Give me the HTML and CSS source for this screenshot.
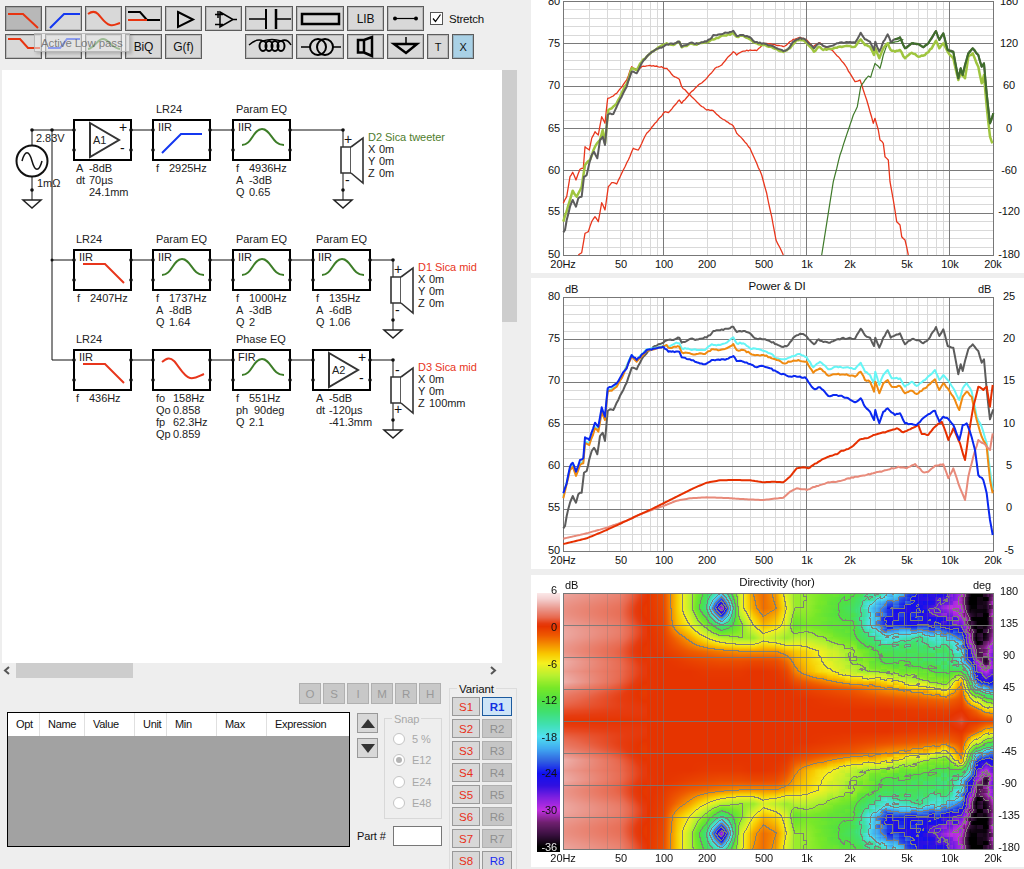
FILE: index.html
```html
<!DOCTYPE html>
<html lang="en">
<head>
<meta charset="utf-8">
<title>VituixCAD</title>
<link rel="stylesheet" href="styles.css">
</head>
<body>
<div class="app">
<div class="left">
  <div class="toolbar">
    <div class="tb-row">
      <button class="tb pressed"><svg width="35" height="23"><path class="ic red" d="M2 7H17L32 21"/></svg></button>
      <button class="tb"><svg width="35" height="23"><path class="ic blue" d="M4 21L18 7H34"/></svg></button>
      <button class="tb"><svg width="35" height="23"><path class="ic red" d="M2 7C6 4 9 4 12 7S19 17 24 18 30 17 34 16"/></svg></button>
      <button class="tb"><svg width="35" height="23"><path class="ic blk" d="M2 5H14L21 13H34"/><path class="ic red" d="M2 13H21"/></svg></button>
      <button class="tb"><svg width="35" height="23"><path class="ic blk" d="M12 5L27 12.500L12 20Z"/></svg></button>
      <button class="tb"><svg width="35" height="23"><path class="ic mid" d="M14 5L27 12.500L14 20ZM27 12.500H31M9 7.500H17M9 17.500H17M12 4V11"/></svg></button>
      <button class="tb wide"><svg width="46" height="23"><path class="ic mid" d="M3 12H20M30 12H45"/><path class="ic blk" d="M20 2V22"/><path class="ic heavy" d="M30 2V22"/></svg></button>
      <button class="tb wide"><svg width="46" height="23"><rect class="ic heavy" x="5" y="7" width="37" height="10"/></svg></button>
      <button class="tb">LIB</button>
      <button class="tb"><svg width="35" height="23"><path class="ic thin" d="M7 11.500H28"/><circle class="dot" cx="7" cy="11.500" r="2"/><circle class="dot" cx="28" cy="11.500" r="2"/></svg></button>
      <span class="check"><svg width="11" height="11"><path class="ic thin" d="M2 5.500L4.500 8.500L9.500 1.500"/></svg></span>
      <span class="check-label">Stretch</span>
    </div>
    <div class="tb-row">
      <button class="tb"><svg width="35" height="23"><path class="ic red" d="M2 4H14L22 13H34"/></svg></button>
      <button class="tb"><svg width="35" height="23"><path class="ic blue" d="M2 13H14L21 4H34"/></svg></button>
      <button class="tb"><svg width="35" height="23"><path class="ic green" d="M2 14C9 13 11 4 17 4S25 13 34 14"/></svg></button>
      <button class="tb">BiQ</button>
      <button class="tb">G(f)</button>
      <button class="tb wide gap-l"><svg width="46" height="23"><path class="ic mid" d="M3 10Q11 3 17 6Q26 3 35 6Q41 3 45 10"/><ellipse class="ic blk" cx="17" cy="11" rx="3.500" ry="5"/><ellipse class="ic blk" cx="23" cy="11" rx="3.500" ry="5"/><ellipse class="ic blk" cx="29" cy="11" rx="3.500" ry="5"/><ellipse class="ic blk" cx="35" cy="11" rx="3.500" ry="5"/></svg></button>
      <button class="tb wide"><svg width="46" height="23"><path class="ic mid" d="M4 12H13M36 12H44"/><circle class="ic blk" cx="21" cy="12" r="8"/><circle class="ic blk" cx="28" cy="12" r="8"/></svg></button>
      <button class="tb"><svg width="35" height="23"><path class="ic heavy" d="M10 5H16V17.500H10ZM16 5L24 2V21L16 17.500"/></svg></button>
      <button class="tb"><svg width="35" height="23"><path class="ic mid" d="M18 2V9"/><path class="ic heavy" d="M6 9H29L18 18Z"/></svg></button>
      <button class="tb narrow">T</button>
      <button class="tb narrow on">X</button>
    </div>
    <div class="tooltip">Active Low pass</div>
  </div>

  <div class="sch-row">
    <div class="schematic">
      <svg class="sch" width="500" height="593" viewBox="2 70 500 593">
        <defs>
          <g id="blk">
            <rect class="box" width="57" height="40"/>
            <circle class="term" cx="0" cy="10" r="1.800"/><circle class="term" cx="0" cy="30" r="1.800"/>
            <circle class="term" cx="57" cy="10" r="1.800"/><circle class="term" cx="57" cy="30" r="1.800"/>
          </g>
          <g id="bell"><path class="cv green" d="M9 25C19 25 20 9 29 9S39 25 51 25"/></g>
          <g id="lp"><path class="cv red" d="M9 14H31L50 33"/></g>
          <g id="hp"><path class="cv blue" d="M9 33L28 14H49"/></g>
          <g id="gnd"><path class="gnd" d="M-9 0H9L0 8Z"/></g>
          <g id="amp"><path class="tri" d="M16 3L45 20L16 37Z"/></g>
          <g id="spk"><path class="spk" d="M-2 0H8V26H-2Z"/><path class="spk" d="M8 0L20 -9V36L8 26"/></g>
        </defs>

        <path class="wire" d="M74 130H32V145M32 177V200M290 130H343V147M343 173V200M52 130V360H74M52 260H74M131 130H153M210 130H233M131 260H153M210 260H233M290 260H313M370 260H393V277M393 303V330M131 360H153M210 360H233M290 360H313M370 360H393V377M393 403V430"/>
        <circle class="term" cx="32" cy="130" r="1.800"/><circle class="term" cx="52" cy="130" r="1.800"/><circle class="term" cx="32" cy="190" r="1.800"/><circle class="term" cx="52" cy="260" r="1.500"/><circle class="term" cx="343" cy="130" r="1.800"/><circle class="term" cx="343" cy="190" r="1.800"/><circle class="term" cx="393" cy="260" r="1.800"/><circle class="term" cx="393" cy="320" r="1.800"/><circle class="term" cx="393" cy="360" r="1.800"/><circle class="term" cx="393" cy="420" r="1.800"/>

        <circle class="src" cx="32" cy="161" r="15.500"/>
        <path class="wire2" d="M22 161C25 150 29 150 32 161S39 172 42 161"/>
        <use href="#gnd" x="32" y="200"/><use href="#gnd" x="343" y="200"/><use href="#gnd" x="393" y="330"/><use href="#gnd" x="393" y="430"/>
        <text x="36" y="142">2.83V</text><text x="37" y="187">1mΩ</text>

        <use href="#blk" x="74" y="120"/><use href="#amp" x="74" y="120"/>
        <text x="93" y="144">A1</text><text class="big" x="119" y="132">+</text><text class="big" x="120" y="153">-</text>
        <text x="76" y="172">A</text><text x="89" y="172">-8dB</text><text x="76" y="184">dt</text><text x="89" y="184">70µs</text><text x="89" y="196">24.1mm</text>

        <text x="156" y="113">LR24</text>
        <use href="#blk" x="153" y="120"/><use href="#hp" x="153" y="120"/><text x="158" y="131">IIR</text>
        <text x="156" y="172">f</text><text x="169" y="172">2925Hz</text>

        <text x="236" y="113">Param EQ</text>
        <use href="#blk" x="233" y="120"/><use href="#bell" x="233" y="120"/><text x="238" y="131">IIR</text>
        <text x="236" y="172">f</text><text x="249" y="172">4936Hz</text><text x="236" y="184">A</text><text x="249" y="184">-3dB</text><text x="236" y="196">Q</text><text x="249" y="196">0.65</text>

        <use href="#spk" x="343" y="147"/>
        <text class="big" x="344" y="144">+</text><text class="big" x="345" y="185">-</text>
        <text class="lab-g" x="368" y="141">D2 Sica tweeter</text><text x="368" y="153">X</text><text x="379" y="153">0m</text><text x="368" y="165">Y</text><text x="379" y="165">0m</text><text x="368" y="177">Z</text><text x="379" y="177">0m</text>

        <text x="76" y="243">LR24</text>
        <use href="#blk" x="74" y="250"/><use href="#lp" x="74" y="250"/><text x="79" y="261">IIR</text>
        <text x="77" y="302">f</text><text x="90" y="302">2407Hz</text>

        <text x="156" y="243">Param EQ</text>
        <use href="#blk" x="153" y="250"/><use href="#bell" x="153" y="250"/><text x="158" y="261">IIR</text>
        <text x="156" y="302">f</text><text x="169" y="302">1737Hz</text><text x="156" y="314">A</text><text x="169" y="314">-8dB</text><text x="156" y="326">Q</text><text x="169" y="326">1.64</text>

        <text x="236" y="243">Param EQ</text>
        <use href="#blk" x="233" y="250"/><use href="#bell" x="233" y="250"/><text x="238" y="261">IIR</text>
        <text x="236" y="302">f</text><text x="249" y="302">1000Hz</text><text x="236" y="314">A</text><text x="249" y="314">-3dB</text><text x="236" y="326">Q</text><text x="249" y="326">2</text>

        <text x="316" y="243">Param EQ</text>
        <use href="#blk" x="313" y="250"/><use href="#bell" x="313" y="250"/><text x="318" y="261">IIR</text>
        <text x="316" y="302">f</text><text x="329" y="302">135Hz</text><text x="316" y="314">A</text><text x="329" y="314">-6dB</text><text x="316" y="326">Q</text><text x="329" y="326">1.06</text>

        <use href="#spk" x="393" y="277"/>
        <text class="big" x="394" y="274">+</text><text class="big" x="395" y="315">-</text>
        <text class="lab-r" x="418" y="271">D1 Sica mid</text><text x="418" y="283">X</text><text x="429" y="283">0m</text><text x="418" y="295">Y</text><text x="429" y="295">0m</text><text x="418" y="307">Z</text><text x="429" y="307">0m</text>

        <text x="76" y="343">LR24</text>
        <use href="#blk" x="74" y="350"/><use href="#lp" x="74" y="350"/><text x="79" y="361">IIR</text>
        <text x="76" y="402">f</text><text x="89" y="402">436Hz</text>

        <use href="#blk" x="153" y="350"/>
        <path class="cv red" d="M162 362C167 358 170 357 174 361S184 377 190 378 199 376 204 374"/>
        <text x="156" y="402">fo</text><text x="173" y="402">158Hz</text><text x="156" y="414">Qo</text><text x="173" y="414">0.858</text><text x="156" y="426">fp</text><text x="173" y="426">62.3Hz</text><text x="156" y="438">Qp</text><text x="173" y="438">0.859</text>

        <text x="236" y="343">Phase EQ</text>
        <use href="#blk" x="233" y="350"/><use href="#bell" x="233" y="350"/><text x="238" y="361">FIR</text>
        <text x="236" y="402">f</text><text x="249" y="402">551Hz</text><text x="236" y="414">ph</text><text x="254" y="414">90deg</text><text x="236" y="426">Q</text><text x="249" y="426">2.1</text>

        <use href="#blk" x="313" y="350"/><use href="#amp" x="313" y="350"/>
        <text x="332" y="374">A2</text><text class="big" x="358" y="362">+</text><text class="big" x="359" y="383">-</text>
        <text x="316" y="402">A</text><text x="329" y="402">-5dB</text><text x="316" y="414">dt</text><text x="329" y="414">-120µs</text><text x="329" y="426">-41.3mm</text>

        <use href="#spk" x="393" y="377"/>
        <text class="big" x="395" y="375">-</text><text class="big" x="394" y="414">+</text>
        <text class="lab-r" x="418" y="371">D3 Sica mid</text><text x="418" y="383">X</text><text x="429" y="383">0m</text><text x="418" y="395">Y</text><text x="429" y="395">0m</text><text x="418" y="407">Z</text><text x="429" y="407">100mm</text>
      </svg>
    </div>
    <div class="vscroll"><div class="vthumb"></div></div>
  </div>

  <div class="hscroll">
    <svg class="chev" width="8" height="9"><path class="ic arrow" d="M6 1L2 4.500L6 8"/></svg>
    <div class="hthumb"></div>
    <svg class="chev chev-end" width="8" height="9"><path class="ic arrow" d="M2 1L6 4.500L2 8"/></svg>
  </div>

  <div class="bottom">
    <div class="main-col">
      <div class="opt-btns">
        <button class="dis">O</button><button class="dis">S</button><button class="dis">I</button><button class="dis">M</button><button class="dis">R</button><button class="dis">H</button>
      </div>
      <div class="opt-row">
        <div class="table">
          <div class="thead">
            <span class="th w32">Opt</span><span class="th w45">Name</span><span class="th w50">Value</span><span class="th w32">Unit</span><span class="th w50">Min</span><span class="th w50">Max</span><span class="th last">Expression</span>
          </div>
        </div>
        <div class="ctrl">
          <div class="ctrl-top">
            <div class="arrows">
              <button class="arrow-btn"><svg width="14" height="9"><path class="tri-fill" d="M7 0L14 9H0Z"/></svg></button>
              <button class="arrow-btn"><svg width="14" height="9"><path class="tri-fill" d="M0 0H14L7 9Z"/></svg></button>
            </div>
            <div class="snap">
              <span class="snap-title">Snap</span>
              <div class="snap-row"><span class="radio"></span>5 %</div>
              <div class="snap-row"><span class="radio on"></span>E12</div>
              <div class="snap-row"><span class="radio"></span>E24</div>
              <div class="snap-row"><span class="radio"></span>E48</div>
            </div>
          </div>
          <div class="part"><span>Part #</span><span class="part-input"></span></div>
        </div>
      </div>
    </div>
    <div class="variant">
      <span class="variant-title">Variant</span>
      <div class="variant-grid">
        <button class="vb s">S1</button><button class="vb r1">R1</button>
        <button class="vb s">S2</button><button class="vb dim">R2</button>
        <button class="vb s">S3</button><button class="vb dim">R3</button>
        <button class="vb s">S4</button><button class="vb dim">R4</button>
        <button class="vb s">S5</button><button class="vb dim">R5</button>
        <button class="vb s">S6</button><button class="vb dim">R6</button>
        <button class="vb s">S7</button><button class="vb dim">R7</button>
        <button class="vb s">S8</button><button class="vb r8">R8</button>
      </div>
    </div>
  </div>
</div>

<div class="right">
  <div class="panel p1">
    <svg class="chart" width="493" height="273" viewBox="531 0 493 273">
      <g id="grid1"></g><g id="curves1"></g>
      <g class="yl"><text x="560" y="5">80</text><text x="560" y="47">75</text><text x="560" y="89">70</text><text x="560" y="132">65</text><text x="560" y="174">60</text><text x="560" y="215">55</text><text x="560" y="258">50</text></g>
      <g class="yr"><text x="1009" y="5">180</text><text x="1009" y="47">120</text><text x="1009" y="89">60</text><text x="1009" y="132">0</text><text x="1009" y="174">-60</text><text x="1009" y="215">-120</text><text x="1009" y="258">-180</text></g>
      <g class="xl"><text x="563" y="268">20Hz</text><text x="621" y="268">50</text><text x="664" y="268">100</text><text x="707" y="268">200</text><text x="764" y="268">500</text><text x="807" y="268">1k</text><text x="850" y="268">2k</text><text x="907" y="268">5k</text><text x="950" y="268">10k</text><text x="993" y="268">20k</text></g>
    </svg>
  </div>
  <div class="panel p2">
    <svg class="chart" width="493" height="291" viewBox="531 278 493 291">
      <g id="grid2"></g><g id="curves2"></g>
      <text class="title" x="777" y="290">Power &amp; DI</text>
      <text x="565" y="293">dB</text><text x="978" y="293">dB</text>
      <g class="yl"><text x="560" y="300">80</text><text x="560" y="342">75</text><text x="560" y="384">70</text><text x="560" y="427">65</text><text x="560" y="469">60</text><text x="560" y="511">55</text><text x="560" y="554">50</text></g>
      <g class="yr"><text x="1009" y="300">25</text><text x="1009" y="342">20</text><text x="1009" y="384">15</text><text x="1009" y="427">10</text><text x="1009" y="469">5</text><text x="1009" y="511">0</text><text x="1009" y="554">-5</text></g>
      <g class="xl"><text x="563" y="564">20Hz</text><text x="621" y="564">50</text><text x="664" y="564">100</text><text x="707" y="564">200</text><text x="764" y="564">500</text><text x="807" y="564">1k</text><text x="850" y="564">2k</text><text x="907" y="564">5k</text><text x="950" y="564">10k</text><text x="993" y="564">20k</text></g>
    </svg>
  </div>
  <div class="panel p3">
    <canvas id="heat" class="heat" width="456" height="259"></canvas>
    <svg class="chart over" width="493" height="292" viewBox="531 575 493 292">
      <g id="grid3"></g>
      <text class="title" x="777" y="586">Directivity (hor)</text>
      <text x="565" y="589">dB</text><text x="973" y="589">deg</text>
      <g class="yc"><text x="557" y="594">6</text><text x="557" y="631">0</text><text x="557" y="668">-6</text><text x="557" y="704">-12</text><text x="557" y="741">-18</text><text x="557" y="777">-24</text><text x="557" y="814">-30</text><text class="on-black" x="557" y="851">-36</text></g>
      <g class="yr"><text x="1009" y="595">180</text><text x="1009" y="627">135</text><text x="1009" y="659">90</text><text x="1009" y="691">45</text><text x="1009" y="723">0</text><text x="1009" y="755">-45</text><text x="1009" y="787">-90</text><text x="1009" y="819">-135</text><text x="1009" y="851">-180</text></g>
      <g class="xl"><text x="563" y="862">20Hz</text><text x="621" y="862">50</text><text x="664" y="862">100</text><text x="707" y="862">200</text><text x="764" y="862">500</text><text x="807" y="862">1k</text><text x="850" y="862">2k</text><text x="907" y="862">5k</text><text x="950" y="862">10k</text><text x="993" y="862">20k</text></g>
    </svg>
  </div>
</div>
</div>
<script src="script.js"></script>
</body>
</html>
```
FILE: styles.css
```css
* { box-sizing: border-box; }
html, body { margin: 0; padding: 0; height: 869px; overflow: hidden; background: #eeeeee; }
body, button { font-family: "Liberation Sans", Arial, sans-serif; font-size: 11px; color: #111; letter-spacing: -0.1px; }
button { padding: 0; margin: 0; cursor: default; }
.app { display: flex; width: 1024px; height: 869px; }
.left { width: 531px; flex: none; display: flex; flex-direction: column; }
.right { width: 493px; flex: none; display: flex; flex-direction: column; }

/* toolbar */
.toolbar { position: relative; height: 70px; padding: 6px 0 0 5px; display: flex; flex-direction: column; gap: 3px; flex: none; }
.tb-row { display: flex; gap: 3px; align-items: center; height: 25px; }
.tb { width: 37px; height: 25px; background: #d8d8d8; border: 1px solid #5c5c5c; box-shadow: inset 0 0 0 1px rgba(90, 90, 90, 0.25); display: flex; align-items: center; justify-content: center; font-size: 12px; }
.tb svg { display: block; }
.tb.wide { width: 48px; }
.tb.narrow { width: 22px; font-size: 11px; }
.tb.on { background: #a9d1e6; }
.tb.pressed { background: #b8b8b8; }
.gap-l { margin-left: 40px; }
.ic { fill: none; stroke-linejoin: miter; }
.ic.red { stroke: #e83410; stroke-width: 2; }
.ic.blue { stroke: #1438f0; stroke-width: 2; }
.ic.green { stroke: #3d7d28; stroke-width: 2; }
.ic.blk { stroke: #000; stroke-width: 2; }
.ic.heavy { stroke: #000; stroke-width: 2.500; }
.ic.mid { stroke: #000; stroke-width: 1.500; }
.ic.thin { stroke: #000; stroke-width: 1.200; }
.ic.arrow { stroke: #555; stroke-width: 2; }
.dot { fill: #000; }
.check { width: 13px; height: 13px; margin-left: 3px; background: #fff; border: 1px solid #555; display: flex; align-items: center; justify-content: center; }
.check-label { margin-left: 3px; font-size: 11.500px; letter-spacing: -0.2px; }
.tooltip { position: absolute; left: 34px; top: 33px; width: 96px; height: 19px; padding-left: 6px; line-height: 18px; font-size: 11.500px; color: rgba(80, 80, 80, 0.7); background: rgba(236, 236, 236, 0.55); border: 1px solid rgba(170, 170, 170, 0.75); box-shadow: 2px 2px 3px rgba(0, 0, 0, 0.18); }

/* schematic */
.sch-row { display: flex; height: 593px; padding-left: 2px; flex: none; }
.schematic { width: 500px; height: 593px; background: #fff; flex: none; }
.sch { display: block; }
.sch text { font-size: 11px; fill: #222; letter-spacing: -0.05px; }
.sch text.big { font-size: 14px; fill: #111; }
.sch text.lab-g { fill: #4f7d2d; }
.sch text.lab-r { fill: #e8361c; }
.box { fill: #fff; stroke: #000; stroke-width: 2; }
.term { fill: #111; }
.wire { fill: none; stroke: #111; stroke-width: 1; }
.wire2 { fill: none; stroke: #111; stroke-width: 1.500; }
.cv { fill: none; stroke-width: 2; }
.cv.red { stroke: #e8361c; }
.cv.blue { stroke: #1438f0; }
.cv.green { stroke: #3d7d28; }
.gnd { fill: #fff; stroke: #222; stroke-width: 1.500; }
.tri { fill: none; stroke: #333; stroke-width: 2; }
.spk { fill: #fff; stroke: #333; stroke-width: 1.600; }
.src { fill: #fff; stroke: #111; stroke-width: 2; }
.vscroll { width: 15px; height: 593px; flex: none; }
.vthumb { width: 15px; height: 252px; background: #cdcdcd; }

/* horizontal scrollbar */
.hscroll { display: flex; align-items: center; height: 15px; flex: none; width: 502px; padding-left: 3px; }
.hthumb { width: 117px; height: 15px; background: #cdcdcd; margin-left: 5px; flex: none; }
.chev { display: block; flex: none; }
.chev-end { margin-left: auto; margin-right: 5px; }

/* bottom */
.bottom { display: flex; height: 191px; flex: none; overflow: hidden; }
.main-col { width: 449px; flex: none; padding: 5px 0 0 7px; display: flex; flex-direction: column; }
.opt-btns { display: flex; gap: 2px; justify-content: flex-end; padding-right: 8px; height: 21px; flex: none; }
.dis { width: 22px; height: 21px; background: #c8c8c8; border: 1px solid #b0b0b0; color: #999; font-size: 11.500px; }
.opt-row { display: flex; gap: 7px; margin-top: 8px; }
.table { width: 343px; height: 135px; background: #a2a2a2; border: 1px solid #000; flex: none; }
.thead { display: flex; height: 23px; background: #fff; align-items: center; }
.th { height: 23px; line-height: 23px; padding-left: 8px; border-right: 1px solid #e0e0e0; letter-spacing: -0.3px; flex: none; }
.w32 { width: 32px; } .w45 { width: 45px; } .w50 { width: 50px; }
.th.last { flex: 1; border-right: 0; }
.ctrl { display: flex; flex-direction: column; gap: 7px; flex: none; width: 85px; }
.ctrl-top { display: flex; gap: 6px; }
.arrows { display: flex; flex-direction: column; gap: 5px; padding-top: 1px; flex: none; }
.arrow-btn { width: 21px; height: 20px; background: #d8d8d8; border: 1px solid #999; display: flex; align-items: center; justify-content: center; }
.tri-fill { fill: #333; }
.snap { position: relative; width: 58px; height: 101px; margin-top: 6px; border: 1px solid #d8d8d8; padding: 9px 0 0 8px; color: #a8a8a8; }
.snap-title { position: absolute; left: 7px; top: -6px; padding: 0 2px; background: #eeeeee; line-height: 12px; color: #a8a8a8; }
.snap-row { display: flex; align-items: center; gap: 7px; height: 21.500px; }
.radio { position: relative; width: 12px; height: 12px; border-radius: 50%; background: #fff; border: 1px solid #c4c4c4; flex: none; }
.radio.on::after { content: ""; position: absolute; left: 2px; top: 2px; width: 6px; height: 6px; border-radius: 50%; background: #b4b4b4; }
.part { display: flex; align-items: center; justify-content: space-between; height: 20px; }
.part-input { width: 49px; height: 20px; background: #fff; border: 1px solid #777; }

/* variant */
.variant { position: relative; width: 68px; height: 190px; margin-top: 10px; flex: none; border: 1px solid #dcdcdc; border-bottom: 0; padding: 8px 0 0 2px; }
.variant-title { position: absolute; left: 7px; top: -6px; padding: 0 2px; background: #eeeeee; line-height: 12px; font-size: 11.500px; }
.variant-grid { display: grid; grid-template-columns: 28px 30px; grid-auto-rows: 19px; column-gap: 2px; row-gap: 3px; }
.vb { border: 1px solid #999; font-size: 11.500px; background: #d8d8d8; }
.vb.s { color: #e8301a; }
.vb.dim { background: #c6c6c6; border-color: #b0b0b0; color: #8f8f8f; }
.vb.r1 { background: #cde4f7; border-color: #1c5a9e; color: #1230e0; font-weight: bold; }
.vb.r8 { color: #1a2cf0; }

/* charts */
.panel { position: relative; background: #fff; flex: none; overflow: hidden; }
.p1 { height: 273px; }
.p2 { height: 291px; margin-top: 5px; }
.p3 { height: 292px; margin-top: 6px; }
.chart { display: block; position: relative; }
.chart text { font-size: 11px; fill: #111; letter-spacing: -0.1px; }
.chart text.title { text-anchor: middle; font-size: 11.500px; }
.chart text.on-black { fill: #e8e8e8; }
.yl text, .yc text { text-anchor: end; }
.yr text, .xl text { text-anchor: middle; }
.heat { position: absolute; left: 6px; top: 18px; }
.g-minor { stroke: #d9d9d9; stroke-width: 1; }
.g-major { stroke: #7a7a7a; stroke-width: 1; }
.g-h-minor { stroke: rgba(120, 120, 120, 0.28); stroke-width: 1; }
.g-h-vmajor { stroke: rgba(120, 120, 120, 0.5); stroke-width: 1; }
.g-h-major { stroke: rgba(120, 120, 120, 0.9); stroke-width: 1; }
.frame { fill: none; stroke: #777; stroke-width: 1; }
.c { fill: none; stroke-linejoin: round; }
.c-gray { stroke: #5c5c5c; stroke-width: 2; }
.c-lime { stroke: #9fc53f; stroke-width: 2.500; }
.c-dgreen { stroke: #3f7a2a; stroke-width: 1.200; }
.c-dgreen2 { stroke: #3f6e2b; stroke-width: 2; }
.c-red { stroke: #e8361c; stroke-width: 1.300; }
.c-blue { stroke: #0a28f0; stroke-width: 2; }
.c-orange { stroke: #f08a10; stroke-width: 2; }
.c-cyan { stroke: #66f5f5; stroke-width: 2; }
.c-di { stroke: #e63000; stroke-width: 2; }
.c-salmon { stroke: #e88a7a; stroke-width: 2; }
```
FILE: script.js
```js
(function () {
  var NS = "http://www.w3.org/2000/svg";
  var X0 = 563.5, DEC = 143, XR = 993.5;
  function fx(f) { return Math.round(X0 + Math.log10(f / 20) * DEC) + 0.5; }
  var FREQS = [];
  [10, 100, 1000, 10000].forEach(function (d) {
    for (var i = 1; i < 10; i++) { var f = d * i; if (f > 20 && f < 20000) FREQS.push(f); }
  });
  function line(g, x1, y1, x2, y2, cls) {
    var l = document.createElementNS(NS, "line");
    l.setAttribute("x1", x1); l.setAttribute("y1", y1); l.setAttribute("x2", x2); l.setAttribute("y2", y2);
    l.setAttribute("class", cls); g.appendChild(l);
  }
  function isMajor(f) { return f === 100 || f === 1000 || f === 10000; }
  function grid(id, top, bottom) {
    var g = document.getElementById(id), i, y;
    for (i = 1; i < 30; i++) {
      if (i % 5 === 0) continue;
      y = Math.round(top + (bottom - top) * i / 30) + 0.5;
      line(g, X0, y, XR, y, "g-minor");
    }
    FREQS.forEach(function (f) { if (!isMajor(f)) line(g, fx(f), top, fx(f), bottom, "g-minor"); });
    for (i = 5; i < 30; i += 5) {
      y = Math.round(top + (bottom - top) * i / 30) + 0.5;
      line(g, X0, y, XR, y, "g-major");
    }
    FREQS.forEach(function (f) { if (isMajor(f)) line(g, fx(f), top, fx(f), bottom, "g-major"); });
    var r = document.createElementNS(NS, "rect");
    r.setAttribute("x", X0); r.setAttribute("y", top + 0.5); r.setAttribute("width", XR - X0); r.setAttribute("height", bottom - top);
    r.setAttribute("class", "frame"); g.appendChild(r);
  }
  grid("grid1", 1, 255);
  grid("grid2", 297, 551);

  var g3 = document.getElementById("grid3");
  FREQS.forEach(function (f) { line(g3, fx(f), 593, fx(f), 849, isMajor(f) ? "g-h-vmajor" : "g-h-minor"); });
  for (var a = 1; a < 8; a++) { var yy = Math.round(593 + a * 32) + 0.5; line(g3, X0, yy, XR, yy, "g-h-major"); }
  var fr = document.createElementNS(NS, "rect");
  fr.setAttribute("x", X0); fr.setAttribute("y", 593.5); fr.setAttribute("width", XR - X0); fr.setAttribute("height", 256); fr.setAttribute("class", "frame");
  g3.appendChild(fr);

  var seed = 12345;
  function rnd() { seed = (seed * 16807) % 2147483647; return seed / 2147483647; }

  function curve(id, pts, cls, yOff, amp, ampFrom, from) {
    var out = [];
    for (var i = 0; i < pts.length - 1; i++) {
      var a = pts[i], b = pts[i + 1];
      if (from !== undefined && b[0] < from) continue;
      var steps = Math.max(1, Math.round((b[0] - a[0]) / 5));
      for (var s = 0; s < steps; s++) {
        var zx = a[0] + (b[0] - a[0]) * s / steps;
        var zy = a[1] + (b[1] - a[1]) * s / steps;
        var n = (s === 0 || zx < ampFrom) ? 0 : (rnd() - 0.5) * amp * 2;
        out.push((520 + zx / 3).toFixed(1) + "," + (yOff + zy / 3 + n).toFixed(1));
      }
    }
    var last = pts[pts.length - 1];
    out.push((520 + last[0] / 3).toFixed(1) + "," + (yOff + last[1] / 3).toFixed(1));
    var p = document.createElementNS(NS, "polyline");
    p.setAttribute("points", out.join(" "));
    p.setAttribute("class", "c " + cls);
    document.getElementById(id).appendChild(p);
  }

  var gray = [[130,697],[135,690],[140,660],[150,620],[158,600],[168,620],[175,595],[185,590],[192,530],[200,525],[208,490],[215,465],[222,455],[232,475],[240,420],[248,410],[255,435],[263,345],[270,340],[280,342],[290,320],[305,290],[320,260],[335,215],[350,220],[365,190],[385,165],[405,150],[430,140],[440,133],[460,132],[478,125],[485,140],[500,135],[512,128],[525,132],[550,127],[570,118],[580,105],[600,103],[620,98],[640,92],[650,108],[670,105],[690,112],[705,127],[730,130],[750,136],[770,145],[790,153],[805,147],[820,125],[840,113],[855,118],[870,133],[882,145],[896,130],[910,138],[925,140],[945,133],[965,127],[985,127],[1005,128],[1022,98],[1035,118],[1050,125],[1062,150],[1066,125],[1078,155],[1090,125],[1103,103],[1112,125],[1125,118],[1140,112],[1155,145],[1175,130],[1195,132],[1210,142],[1225,130],[1248,93],[1258,120],[1270,100],[1283,150],[1300,155],[1315,235],[1322,205],[1328,225],[1335,195],[1345,160],[1358,145],[1375,165],[1385,200],[1392,190],[1400,280],[1410,370],[1420,340]];
  var lime = [[130,665],[150,600],[158,572],[170,590],[185,560],[195,495],[210,480],[225,440],[240,420],[248,390],[255,430],[265,330],[275,325],[290,310],[305,280],[325,240],[335,205],[350,210],[365,185],[385,165],[405,150],[430,135],[440,130],[460,135],[478,125],[485,142],[500,138],[512,130],[525,133],[550,128],[570,122],[600,110],[640,100],[650,110],[670,107],[690,118],[705,128],[730,135],[770,147],[790,156],[810,145],[830,120],[850,120],[870,140],[882,155],[896,140],[910,150],[945,143],[985,138],[1005,140],[1022,118],[1035,135],[1050,140],[1062,165],[1066,145],[1078,175],[1090,145],[1103,130],[1112,150],[1125,155],[1140,150],[1155,175],[1175,158],[1195,170],[1215,165],[1235,145],[1248,122],[1258,145],[1270,130],[1283,155],[1300,175],[1315,240],[1322,220],[1335,235],[1345,170],[1358,160],[1375,200],[1385,250],[1392,225],[1400,320],[1410,410],[1417,430]];
  var tweeter = [[905,765],[920,670],[940,545],[960,465],[985,390],[1000,345],[1012,320],[1022,260],[1035,240],[1045,228],[1052,232],[1065,190],[1080,205],[1090,165],[1103,130],[1130,125],[1150,118]];
  var redLP = [[130,610],[140,590],[150,530],[158,517],[168,540],[180,508],[190,505],[195,440],[208,450],[215,415],[225,395],[235,405],[245,350],[255,370],[263,295],[275,290],[290,280],[305,262],[320,240],[335,200],[350,210],[365,200],[385,197],[410,198],[440,205],[460,228],[478,238],[485,260],[510,285],[540,315],[560,330],[580,332],[600,352],[620,365],[640,378],[650,400],[670,420],[690,445],[710,490],[725,525],[740,580],[755,650],[768,720],[790,765]];
  var redHP = [[175,765],[185,758],[195,700],[205,695],[215,665],[225,650],[235,665],[245,608],[255,630],[265,560],[275,548],[290,552],[305,520],[325,480],[340,445],[355,450],[380,400],[410,365],[435,335],[445,338],[465,315],[478,300],[485,310],[510,280],[530,260],[555,240],[585,205],[605,195],[625,170],[640,155],[650,165],[665,155],[690,150],[710,152],[735,130],[760,133],[790,140],[805,130],[820,118],[840,112],[860,120],[880,140],[897,128],[915,140],[935,150],[955,170],[975,195],[990,220],[1005,245],[1020,240],[1030,270],[1040,300],[1050,335],[1060,370],[1065,355],[1075,390],[1080,420],[1090,430],[1095,470],[1105,480],[1110,545],[1120,600],[1130,665],[1140,675],[1145,710],[1155,720],[1165,765]];
  curve("curves1", redLP, "c-red", 0, 0.5, 0);
  curve("curves1", redHP, "c-red", 0, 0.5, 0);
  curve("curves1", tweeter, "c-dgreen", 0, 0.4, 0);
  curve("curves1", lime, "c-lime", 0, 0.7, 0);
  curve("curves1", gray, "c-gray", 0, 0.7, 0);
  curve("curves1", gray, "c-dgreen2", 0, 0.7, 0, 1130);

  var orange = [[130,655],[150,570],[158,560],[168,588],[180,555],[190,550],[195,490],[208,495],[225,445],[235,455],[245,395],[255,420],[263,335],[275,332],[290,320],[305,295],[335,230],[350,245],[380,212],[410,205],[440,195],[445,203],[478,200],[485,217],[510,220],[530,222],[555,222],[575,208],[600,210],[620,205],[640,192],[650,210],[670,210],[690,220],[710,225],[730,225],[750,232],[770,240],[790,250],[810,245],[835,240],[860,245],[880,278],[900,265],[925,287],[950,283],[980,283],[1005,290],[1022,275],[1035,300],[1050,305],[1062,335],[1066,305],[1078,340],[1090,310],[1103,300],[1115,320],[1140,318],[1155,340],[1175,332],[1190,342],[1215,325],[1245,298],[1258,330],[1270,310],[1283,325],[1300,350],[1318,390],[1328,350],[1340,335],[1355,350],[1370,420],[1385,470],[1400,500],[1410,600],[1418,640]];
  var cyan = [[130,650],[150,565],[158,555],[168,583],[180,550],[190,545],[195,485],[208,490],[225,440],[235,450],[245,390],[255,415],[263,330],[275,327],[290,315],[305,290],[335,225],[350,240],[380,208],[410,203],[440,197],[445,200],[465,190],[478,190],[485,205],[510,208],[530,210],[555,210],[575,193],[600,195],[620,188],[640,172],[650,190],[670,190],[690,205],[710,207],[730,212],[750,220],[770,235],[790,238],[810,232],[835,222],[860,232],[880,262],[900,245],[925,268],[950,260],[980,262],[1005,267],[1022,248],[1035,275],[1050,285],[1062,310],[1066,275],[1078,315],[1090,285],[1103,270],[1115,295],[1140,295],[1155,320],[1175,305],[1190,318],[1215,300],[1245,270],[1258,300],[1270,285],[1283,300],[1300,325],[1318,360],[1328,325],[1340,310],[1355,335],[1370,410],[1385,440],[1400,490],[1410,570],[1418,630]];
  var blue = [[130,640],[140,610],[150,560],[158,548],[168,575],[180,540],[190,535],[195,472],[208,480],[225,428],[235,440],[245,382],[255,410],[263,325],[275,320],[290,310],[305,285],[320,265],[335,225],[350,240],[380,210],[410,205],[430,200],[445,215],[478,215],[485,232],[510,238],[530,247],[555,253],[575,240],[600,240],[620,237],[640,228],[650,243],[670,245],[690,252],[710,262],[730,258],[750,265],[770,275],[800,287],[830,290],[855,292],[875,320],[885,328],[900,322],[925,348],[950,345],[980,353],[1005,367],[1022,355],[1035,380],[1050,395],[1062,420],[1066,390],[1078,430],[1090,395],[1103,385],[1125,405],[1140,400],[1155,430],[1175,432],[1190,435],[1215,410],[1245,392],[1258,425],[1270,410],[1283,415],[1300,435],[1318,480],[1328,435],[1340,430],[1350,455],[1365,510],[1375,585],[1390,600],[1400,640],[1410,720],[1418,765]];
  var di = [[130,792],[200,775],[260,750],[320,722],[360,703],[400,685],[430,670],[480,645],[520,625],[560,608],[600,601],[640,600],[690,601],[730,607],[760,605],[790,607],[810,590],[830,565],[850,562],[865,565],[880,555],[900,543],[930,528],[950,523],[965,512],[985,507],[1000,497],[1015,482],[1025,477],[1040,475],[1060,465],[1080,460],[1100,455],[1130,445],[1150,457],[1175,445],[1195,435],[1205,462],[1225,465],[1245,440],[1265,425],[1275,450],[1285,480],[1300,445],[1320,490],[1335,540],[1345,470],[1360,380],[1375,320],[1390,330],[1400,320],[1410,380],[1418,315]];
  var salmon = [[130,776],[200,760],[260,743],[320,722],[360,703],[400,688],[430,678],[470,662],[510,655],[560,652],[620,654],[680,658],[730,660],[790,653],[810,635],[830,625],[860,630],[890,618],[925,607],[950,605],[985,595],[1020,588],[1060,580],[1100,570],[1135,560],[1160,565],[1185,552],[1210,577],[1225,575],[1245,557],[1270,553],[1285,595],[1300,565],[1315,610],[1335,660],[1345,590],[1360,530],[1375,480],[1390,490],[1400,500],[1410,510],[1418,460]];
  curve("curves2", gray, "c-gray", 296, 0.7, 0);
  curve("curves2", cyan, "c-cyan", 280, 0.7, 0);
  curve("curves2", orange, "c-orange", 280, 0.7, 0);
  curve("curves2", salmon, "c-salmon", 280, 0.5, 850);
  curve("curves2", di, "c-di", 280, 0.5, 850);
  curve("curves2", blue, "c-blue", 280, 0.7, 0);

  /* heat map */
  var CM = [[6,255,245,245],[4.5,244,208,208],[3,234,154,144],[1.5,232,106,80],[0.5,230,60,16],[0,230,52,0],[-1.5,238,90,0],[-3,244,144,0],[-4.5,248,200,0],[-6,245,240,32],[-8,184,240,48],[-10,120,232,40],[-12,80,224,64],[-14,64,224,112],[-16,64,224,176],[-18,80,224,240],[-20,64,168,240],[-22,48,96,224],[-24,16,16,240],[-26,48,16,224],[-28,128,32,224],[-30,192,48,224],[-32,112,32,112],[-34,58,16,64],[-36,0,0,0]];
  function cmap(v) {
    if (v >= 6) return [255, 245, 245];
    if (v <= -36) return [0, 0, 0];
    for (var i = 0; i < CM.length - 1; i++) {
      var a = CM[i], b = CM[i + 1];
      if (v <= a[0] && v >= b[0]) {
        var t = (a[0] - v) / (a[0] - b[0]);
        return [a[1] + (b[1] - a[1]) * t, a[2] + (b[2] - a[2]) * t, a[3] + (b[3] - a[3]) * t];
      }
    }
    return [0, 0, 0];
  }
  var TH = [0, 15, 30, 45, 55, 70, 84, 98, 117, 135, 159, 180];
  var TAB = [
    [130, 0, 0.6, 1.8, 3, 3.7, 2.8, 3.5, 3.2, 3.2, 3, 3, 3],
    [300, 0, 0.2, 0.6, 1.2, 1.4, 1.2, 1.5, 1.6, 1.8, 1.8, 2, 2],
    [370, 0, 0, 0, 0.1, 0.1, 0.1, 0.2, 0.2, 0.2, 0.2, 0.2, 0.2],
    [430, 0, 0, 0, 0, 0, 0, 0, -0.2, -0.4, -0.6, -0.8, -1],
    [470, 0, 0, 0, 0, 0, 0, -0.2, -0.8, -2, -4, -4.5, -4.5],
    [510, 0, 0, 0, 0, 0, 0, -0.5, -1.5, -3.5, -6, -8, -8],
    [560, 0, 0, 0, 0, 0, -0.2, -0.8, -2, -6, -10, -15, -13],
    [605, 0, 0, 0, 0, 0, -0.2, -1, -2.5, -8, -15, -30, -18],
    [660, 0, 0, 0, 0, 0, -0.2, -1, -3, -9, -10, -7, -7],
    [700, 0, 0, 0, 0, 0, 0, -0.8, -3, -9, -6, -3.5, -3],
    [730, 0, 0, 0, 0, 0, 0, -0.8, -3, -7, -4, -2, -2],
    [770, 0, 0, 0, 0, 0, -0.2, -1, -3, -8, -5, -3, -3.5],
    [800, 0, 0, 0, 0, -0.2, -0.8, -2, -3.8, -9, -7, -6, -7],
    [825, 0, 0, 0, -0.2, -1, -2.5, -3.5, -4.5, -8, -11, -9, -9],
    [860, 0, 0, 0, -0.5, -1.5, -4, -4.5, -5, -8, -10, -9, -9],
    [1000, 0, 0, -0.5, -1.5, -4, -8, -9, -9, -11, -12, -13.5, -12],
    [1100, 0, 0, -1, -3, -5, -10, -12, -13, -18, -24, -23, -17],
    [1200, 0, -0.3, -1.5, -4, -8, -11, -13, -13, -15, -24, -25, -24],
    [1280, 0, -0.5, -2, -7, -10, -13, -14, -14, -18, -25, -29, -26],
    [1325, 1, 0, -1, -2, -3, -12, -17, -18, -22, -27, -30, -31],
    [1350, 0, -1, -5, -10, -14, -18, -24, -26, -30, -33, -36, -36],
    [1370, 0, -2, -7, -16, -22, -26, -30, -34, -36, -36, -36, -36],
    [1398, -0.5, -4, -10, -20, -26, -30, -34, -31, -34, -36, -36, -36],
    [1420, -0.5, -5, -12, -22, -24, -28, -28, -28, -30, -30, -31, -31]
  ];
  function at(zx, th) {
    var c = 0, r = 0;
    while (c < TAB.length - 2 && zx > TAB[c + 1][0]) c++;
    while (r < TH.length - 2 && th > TH[r + 1]) r++;
    var u = Math.min(1, Math.max(0, (zx - TAB[c][0]) / (TAB[c + 1][0] - TAB[c][0])));
    var w = Math.min(1, Math.max(0, (th - TH[r]) / (TH[r + 1] - TH[r])));
    var A = TAB[c], B = TAB[c + 1];
    return (A[r + 1] * (1 - w) + A[r + 2] * w) * (1 - u) + (B[r + 1] * (1 - w) + B[r + 2] * w) * u;
  }
  function hash(a, b) {
    var s = Math.sin(a * 127.1 + b * 311.7) * 43758.5453;
    return (s - Math.floor(s)) - 0.5;
  }
  var W = 430, H = 256, field = new Float32Array(W * H), px, py;
  for (py = 0; py < H; py++) {
    var th = Math.abs(180 - py * 360 / (H - 1));
    for (px = 0; px < W; px++) {
      var zx = 130 + px * 3;
      var v = at(zx, th);
      var amp = Math.max(0, Math.min(1, (zx - 850) / 250));
      if (amp > 0 && v < -3) {
        var hy = Math.floor(Math.abs(py - 127.5) / 4);
        v += (v < -14 ? 2.6 : 1.4) * amp * hash(Math.floor(px / 6), hy);
      } else if (zx < 380) {
        v += 0.3 * Math.sin(th / 9);
      }
      field[py * W + px] = v;
    }
  }
  var cv = document.getElementById("heat"), ctx = cv.getContext("2d");
  var img = ctx.createImageData(456, 259), d = img.data;
  function put(x, y, c) {
    var i = (y * 456 + x) * 4;
    d[i] = c[0]; d[i + 1] = c[1]; d[i + 2] = c[2]; d[i + 3] = 255;
  }
  for (py = 0; py < 259; py++) {
    var bc = cmap((33 - py) / 6.12);
    for (px = 0; px < 23; px++) put(px, py, bc);
  }
  var GC = [128, 128, 118];
  for (py = 0; py < H; py++) {
    for (px = 0; px < W; px++) {
      var val = field[py * W + px];
      var c = cmap(val);
      var lv = Math.floor(val / 3);
      var r = px < W - 1 ? Math.floor(field[py * W + px + 1] / 3) : lv;
      var b = py < H - 1 ? Math.floor(field[(py + 1) * W + px] / 3) : lv;
      if ((r !== lv || b !== lv) && val < -2.5 && val > -33) c = GC;
      put(px + 26, py, c);
    }
  }
  ctx.putImageData(img, 0, 0);
})();
```
